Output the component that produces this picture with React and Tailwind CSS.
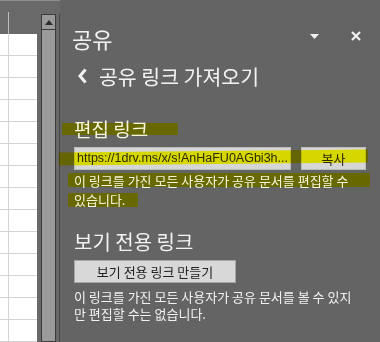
import React from "react";

const ko = { fontFamily: '"Noto Sans CJK KR", "Noto Sans", sans-serif' };
const latin = { fontFamily: '"Liberation Sans", Arial, sans-serif' };

const rows = Array.from({ length: 14 });

const SheetEdge = () => (
  <div className="w-[60px] flex flex-col bg-[#696969]">
    <div className="h-[2px] bg-[#8e8e8e]" />
    <div className="flex flex-1">
      <div className="w-[38px] flex flex-col">
        {/* column header */}
        <div className="h-[33px] shrink-0 flex">
          <div className="ml-[8px] mt-[11px] w-px bg-[#bdbdbd]" />
        </div>
        <div className="flex-1 bg-white flex flex-col overflow-hidden">
          {rows.map((_, i) => (
            <div key={i} className="h-[22px] shrink-0 flex border-b border-[#d4d4d4]">
              <div className="w-[9px] border-r border-[#d4d4d4]" />
            </div>
          ))}
        </div>
      </div>
      <div className="w-[4px]" />
      {/* scrollbar */}
      <div className="w-[15px] mt-[13px] border border-[#3b3b3b] bg-[#9b9b9b] flex flex-col">
        <div className="h-[15px] shrink-0 border-b border-[#3b3b3b] flex items-center justify-center">
          <svg width="8" height="5" viewBox="0 0 8 5">
            <polygon points="0,5 4,0 8,5" fill="#2e2e2e" />
          </svg>
        </div>
      </div>
      <div className="w-[3px]" />
      <div className="w-px mt-[13px] bg-[#474747]" />
    </div>
  </div>
);

const SharePanel = () => (
  <div className="flex-1 flex flex-col text-[#f2f2f2]" style={ko}>
    {/* title */}
    <div className="mt-[24px] h-[28px] flex items-center">
      <span className="ml-[12px] text-[22px] leading-[28px]">공유</span>
      <div className="flex-1" />
      <svg width="9" height="5" viewBox="0 0 9 5" className="-mt-[3px]">
        <polygon points="0,0 9,0 4.5,5" fill="#f2f2f2" />
      </svg>
      <svg width="10" height="10" viewBox="0 0 10 10" className="ml-[32px] mr-[19px] -mt-[4px]">
        <path d="M1 1 L9 9 M9 1 L1 9" stroke="#f2f2f2" strokeWidth="2.2" />
      </svg>
    </div>

    {/* back */}
    <div className="mt-[10px] h-[28px] flex items-center">
      <svg width="9" height="16" viewBox="0 0 9 16" className="ml-[18px]">
        <polyline points="7.5,1.5 2,8 7.5,14.5" fill="none" stroke="#f2f2f2" strokeWidth="3" />
      </svg>
      <span className="ml-[12px] text-[20.5px] leading-[28px]">공유 링크 가져오기</span>
    </div>

    {/* edit link */}
    <div className="relative z-10 mt-[27px] ml-[14px] text-[19px] leading-[24px] text-[#f6f6dc]">
      편집 링크
    </div>
    <div className="relative z-10 mt-[6px] ml-[14px] flex gap-[10px]">
      <div
        className="w-[217px] h-[23px] border border-[#bcbcbc] bg-[#d6d6d6] pl-[2px] text-[12.5px] leading-[21px] text-[#2a2a2a] whitespace-nowrap overflow-hidden"
        style={latin}
      >
        https://1drv.ms/x/s!AnHaFU0AGbi3h...
      </div>
      <button className="w-[65px] h-[23px] border border-[#bcbcbc] bg-[#d6d6d6] text-[13px] leading-[21px] text-[#2a2a2a]">
        복사
      </button>
    </div>
    <p className="relative z-10 mt-[1px] ml-[14px] text-[13px] leading-[19px] text-[#f6f6dc] whitespace-nowrap">
      이 링크를 가진 모든 사용자가 공유 문서를 편집할 수
      <br />
      있습니다.
    </p>

    {/* view-only link */}
    <div className="mt-[20px] ml-[14px] text-[20px] leading-[26px]">보기 전용 링크</div>
    <button className="mt-[5px] ml-[14px] w-[162px] h-[23px] border border-[#a6a6a6] bg-[#d8d8d8] text-[13px] leading-[21px] text-[#222]">
      보기 전용 링크 만들기
    </button>
    <p className="mt-[5px] ml-[14px] text-[13px] leading-[17px] whitespace-nowrap">
      이 링크를 가진 모든 사용자가 공유 문서를 볼 수 있지
      <br />
      만 편집할 수는 없습니다.
    </p>
  </div>
);

export default function App() {
  return (
    <div className="relative w-[380px] h-[342px] overflow-hidden flex bg-[#646464]">
      <SheetEdge />
      <SharePanel />

      {/* highlighter marks */}
      <div className="absolute left-[62px] top-[123px] w-[116px] h-[12px] bg-[#686800]" />
      <div className="absolute left-[68px] top-[173px] w-[302px] h-[14px] bg-[#686800]" />
      <div className="absolute left-[68px] top-[193px] w-[70px] h-[14px] bg-[#686800]" />
      <div className="absolute z-20 left-[59px] top-[151px] w-[309px] h-[13px] bg-[#ffff00] mix-blend-multiply -rotate-[0.55deg]" />
    </div>
  );
}
